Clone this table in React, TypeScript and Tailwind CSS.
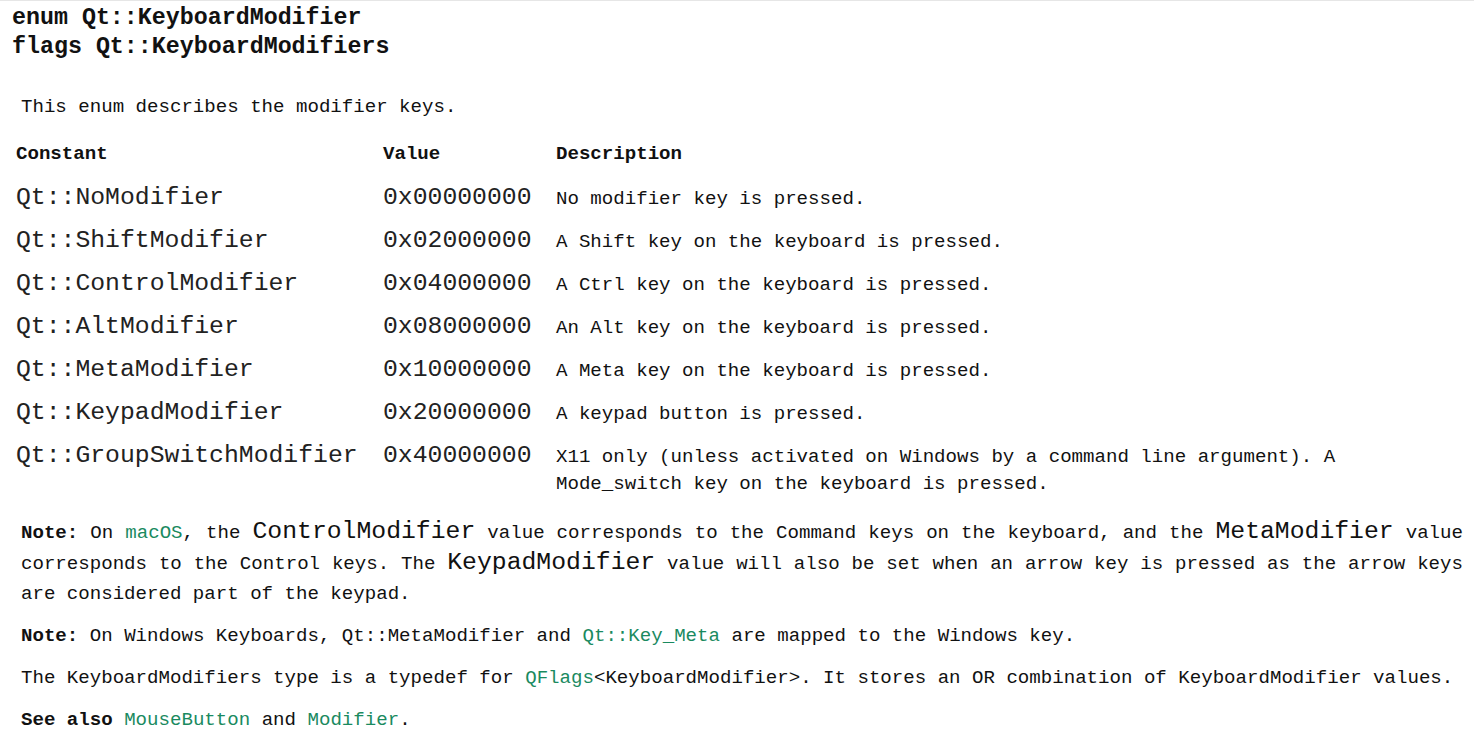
import React from 'react';

const body = "font-['Liberation_Mono',_'DejaVu_Sans_Mono',_monospace]";

const rows: [string, string, string][] = [
  ['Qt::NoModifier', '0x00000000', 'No modifier key is pressed.'],
  ['Qt::ShiftModifier', '0x02000000', 'A Shift key on the keyboard is pressed.'],
  ['Qt::ControlModifier', '0x04000000', 'A Ctrl key on the keyboard is pressed.'],
  ['Qt::AltModifier', '0x08000000', 'An Alt key on the keyboard is pressed.'],
  ['Qt::MetaModifier', '0x10000000', 'A Meta key on the keyboard is pressed.'],
  ['Qt::KeypadModifier', '0x20000000', 'A keypad button is pressed.'],
  [
    'Qt::GroupSwitchModifier',
    '0x40000000',
    'X11 only (unless activated on Windows by a command line argument). A Mode_switch key on the keyboard is pressed.',
  ],
];

function Code({ children }: { children: React.ReactNode }) {
  return <span className="text-[24.75px] leading-[1]">{children}</span>;
}

function A({ children }: { children: React.ReactNode }) {
  return <span className="text-[#1a8a5f]">{children}</span>;
}

export default function App() {
  return (
    <div className={`min-h-screen w-full bg-white border-t border-[#e6e6e6] text-[#111] ${body}`}>
      {/* title block */}
      <div className="pl-[12px] pt-[3px] text-[23.3px] leading-[29px] font-bold">
        <div>enum Qt::KeyboardModifier</div>
        <div>flags Qt::KeyboardModifiers</div>
      </div>

      <p className="pl-[21px] mt-[32px] text-[19.1px] leading-[27px]">This enum describes the modifier keys.</p>

      {/* table */}
      <div className="mt-[12px] pl-[16px] text-[19.1px] leading-[27px]">
        <div className="flex items-baseline pt-2 pb-[9px] font-bold">
          <div className="w-[367px] shrink-0">Constant</div>
          <div className="w-[173px] shrink-0">Value</div>
          <div>Description</div>
        </div>
        {rows.map(([name, value, desc]) => (
          <div key={name} className="flex items-baseline py-[7.5px]">
            <div className="w-[367px] shrink-0 text-[24.75px] leading-[24px] text-[#222]">{name}</div>
            <div className="w-[173px] shrink-0 text-[24.75px] leading-[24px] text-[#222]">{value}</div>
            <div className="w-[830px]">{desc}</div>
          </div>
        ))}
      </div>

      <div className="pl-[21px] pr-[11px] mt-[13px] text-[19.1px] leading-[30.5px]">
        <p className="mb-[11.5px] text-justify">
          <b>Note:</b> On <A>macOS</A>, the <Code>ControlModifier</Code> value corresponds to the Command keys on the
          keyboard, and the <Code>MetaModifier</Code> value corresponds to the Control keys. The{' '}
          <Code>KeypadModifier</Code> value will also be set when an arrow key is pressed as the arrow keys are
          considered part of the keypad.
        </p>
        <p className="mb-[11.5px]">
          <b>Note:</b> On Windows Keyboards, Qt::MetaModifier and <A>Qt::Key_Meta</A> are mapped to the Windows key.
        </p>
        <p className="mb-[11.5px]">
          The KeyboardModifiers type is a typedef for <A>QFlags</A>&lt;KeyboardModifier&gt;. It stores an OR
          combination of KeyboardModifier values.
        </p>
        <p>
          <b>See also</b> <A>MouseButton</A> and <A>Modifier</A>.
        </p>
      </div>
    </div>
  );
}
